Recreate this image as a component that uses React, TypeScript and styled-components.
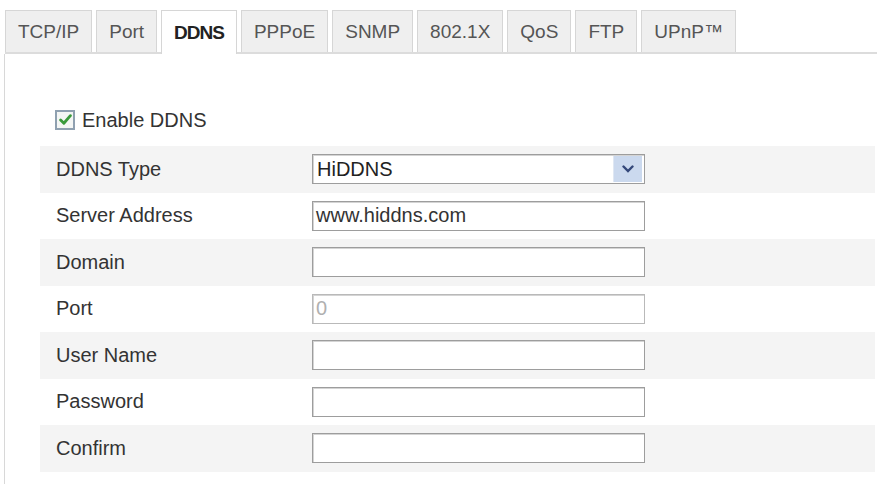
import styled, { createGlobalStyle } from "styled-components";

const GlobalStyle = createGlobalStyle`
  body {
    margin: 0;
    background: #fff;
    font-family: "Liberation Sans", Arial, sans-serif;
    color: #333;
  }
`;

const Page = styled.div`
  width: 881px;
  height: 484px;
  overflow: hidden;
  padding-top: 9px;
  box-sizing: border-box;
`;

const TabBar = styled.div`
  display: flex;
  align-items: flex-end;
  gap: 4px;
  margin-left: 5px;
  width: 872px;
  height: 43px;
  border-bottom: 2px solid #dcdcdc;
`;

const Tab = styled.div<{ $active?: boolean }>`
  height: ${({ $active }) => ($active ? "44px" : "42px")};
  margin-bottom: ${({ $active }) => ($active ? "-2px" : "0")};
  padding: 0 12px;
  display: flex;
  align-items: center;
  box-sizing: border-box;
  border: 1px solid #d6d6d6;
  border-bottom: none;
  background: ${({ $active }) => ($active ? "#fff" : "#efefef")};
  color: ${({ $active }) => ($active ? "#222" : "#555")};
  font-size: 19px;
  font-weight: ${({ $active }) => ($active ? "700" : "400")};
  letter-spacing: ${({ $active }) => ($active ? "-1px" : "0")};
  white-space: nowrap;
`;

const Panel = styled.div`
  margin-left: 4px;
  border-left: 1px solid #d8d8d8;
  padding: 55px 0 0 35px;
  height: 440px;
  box-sizing: border-box;
`;

const CheckLine = styled.label`
  display: flex;
  align-items: center;
  gap: 7px;
  margin-left: 15px;
  height: 22px;
  font-size: 20px;
  color: #333;
  margin-bottom: 15px;
`;

const CheckBox = styled.span`
  width: 20px;
  height: 20px;
  box-sizing: border-box;
  border: 2px solid #8fa0b0;
  background: #f4f6f4;
  display: flex;
  align-items: center;
  justify-content: center;
`;

const Rows = styled.div`
  width: 835px;
`;

const Row = styled.div<{ $shaded: boolean }>`
  display: flex;
  align-items: center;
  height: 46.5px;
  padding-left: 16px;
  background: ${({ $shaded }) => ($shaded ? "#f4f4f4" : "#fff")};
`;

const Label = styled.div`
  width: 256px;
  font-size: 20px;
  color: #333;
`;

const TextBox = styled.div<{ $disabled?: boolean }>`
  width: 333px;
  height: 30px;
  box-sizing: border-box;
  border: 1px solid ${({ $disabled }) => ($disabled ? "#b9b9b9" : "#9d9d9d")};
  box-shadow: inset 1px 1px 0 #d4d4d4;
  background: #fff;
  padding: 0 3px;
  display: flex;
  align-items: center;
  font-size: 20px;
  color: ${({ $disabled }) => ($disabled ? "#b0b0b0" : "#333")};
`;

const SelectBox = styled(TextBox)`
  justify-content: space-between;
  padding: 1px 2px 1px 4px;
  color: #222;
`;

const SelectButton = styled.span`
  width: 28px;
  height: 26px;
  background: #cbd9ee;
  border-left: 1px solid #dfe7f3;
  display: flex;
  align-items: center;
  justify-content: center;
`;

const tabs = ["TCP/IP", "Port", "DDNS", "PPPoE", "SNMP", "802.1X", "QoS", "FTP", "UPnP™"];

const fields: { label: string; value?: string; disabled?: boolean }[] = [
  { label: "Server Address", value: "www.hiddns.com" },
  { label: "Domain" },
  { label: "Port", value: "0", disabled: true },
  { label: "User Name" },
  { label: "Password" },
  { label: "Confirm" },
];

export default function App() {
  return (
    <>
      <GlobalStyle />
      <Page>
        <TabBar>
          {tabs.map((t) => (
            <Tab key={t} $active={t === "DDNS"}>
              {t}
            </Tab>
          ))}
        </TabBar>
        <Panel>
          <CheckLine>
            <CheckBox>
              <svg width="13" height="12" viewBox="0 0 12 11">
                <path
                  d="M1.5 5.5 L4.5 8.5 L10.5 1.5"
                  fill="none"
                  stroke="#3a9a3a"
                  strokeWidth="2.6"
                  strokeLinecap="round"
                  strokeLinejoin="round"
                />
              </svg>
            </CheckBox>
            Enable DDNS
          </CheckLine>
          <Rows>
            <Row $shaded>
              <Label>DDNS Type</Label>
              <SelectBox>
                HiDDNS
                <SelectButton>
                  <svg width="12" height="8" viewBox="0 0 12 8">
                    <path
                      d="M1.5 1.5 L6 6 L10.5 1.5"
                      fill="none"
                      stroke="#34487a"
                      strokeWidth="2.4"
                      strokeLinecap="round"
                    />
                  </svg>
                </SelectButton>
              </SelectBox>
            </Row>
            {fields.map((f, i) => (
              <Row key={f.label} $shaded={i % 2 === 1}>
                <Label>{f.label}</Label>
                <TextBox $disabled={f.disabled}>{f.value}</TextBox>
              </Row>
            ))}
          </Rows>
        </Panel>
      </Page>
    </>
  );
}
